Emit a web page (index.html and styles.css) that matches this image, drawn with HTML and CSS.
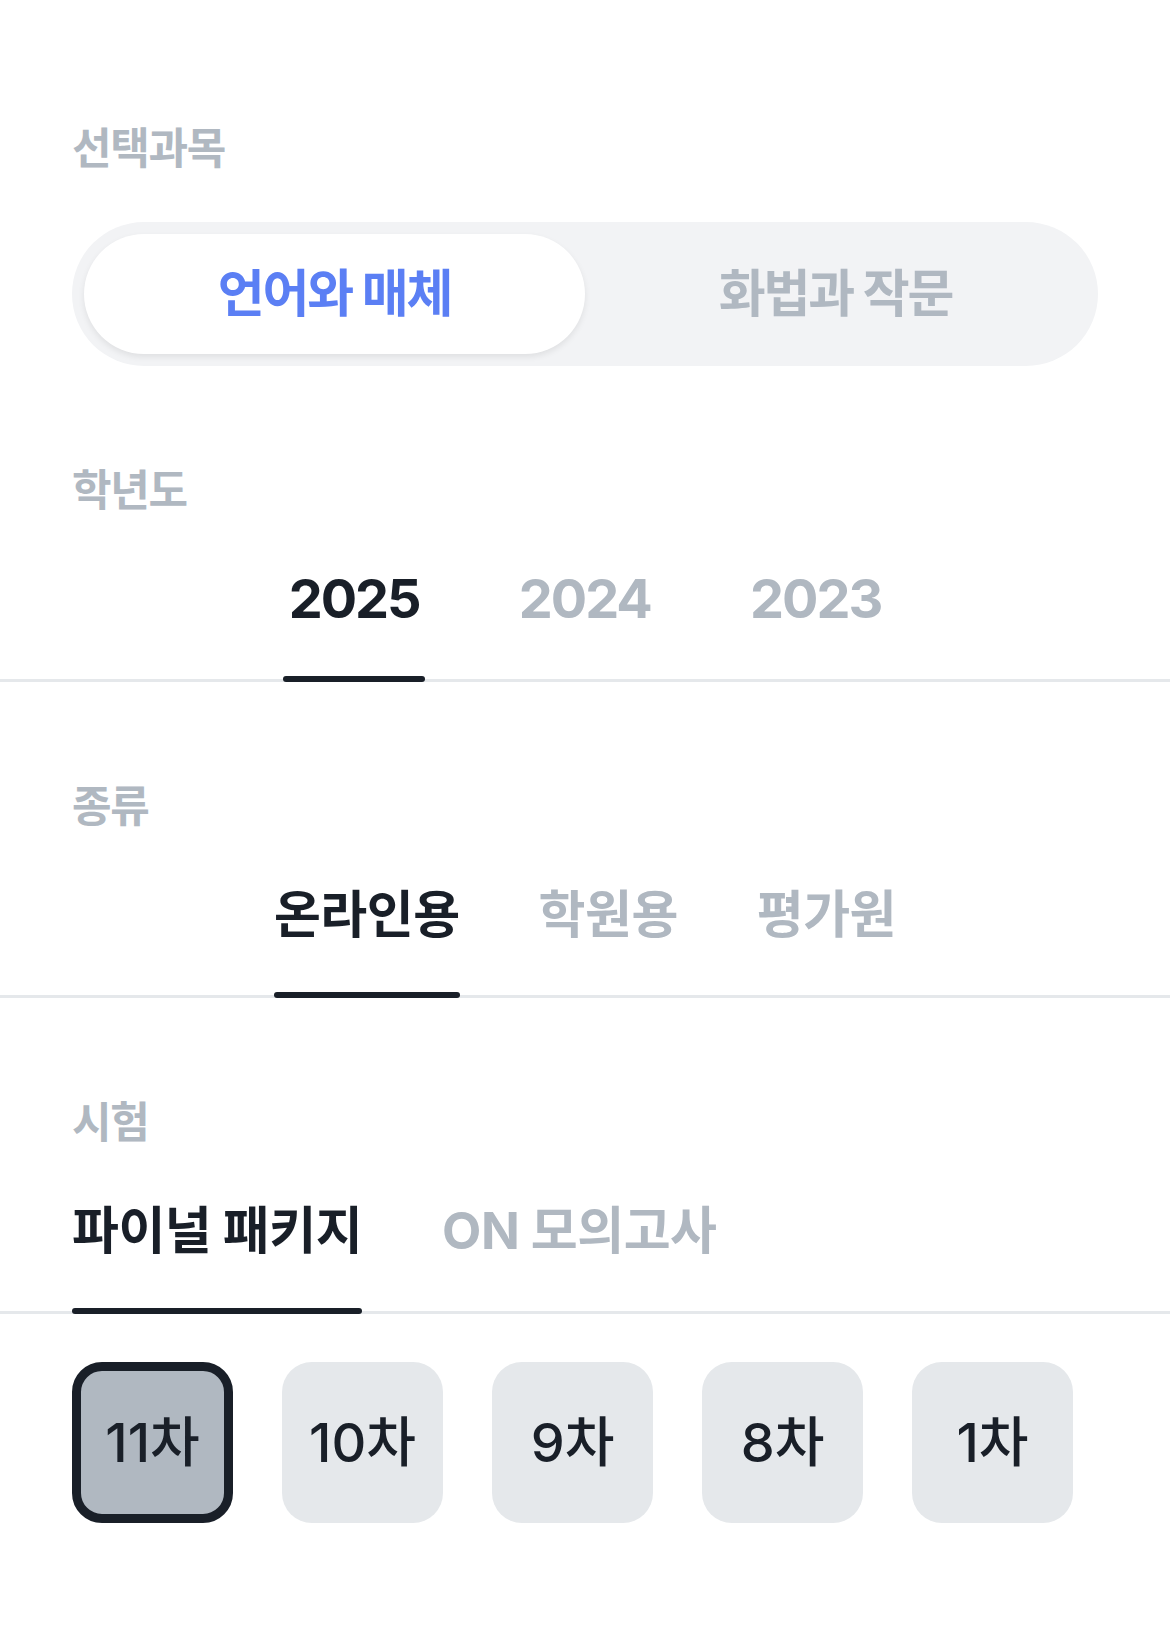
FILE: index.html
```html
<!DOCTYPE html>
<html lang="ko">
<head>
<meta charset="utf-8">
<title>선택과목</title>
<link rel="stylesheet" href="styles.css">
</head>
<body>
<main class="page">
  <section class="group">
    <h2 class="label">선택과목</h2>
    <div class="segment">
      <button class="segment-item is-active">언어와 매체</button>
      <button class="segment-item">화법과 작문</button>
    </div>
  </section>

  <section class="group">
    <h2 class="label">학년도</h2>
    <div class="tabs">
      <div class="tabs-inner tabs-center">
        <button class="tab tab-num is-active">2025</button>
        <button class="tab tab-num">2024</button>
        <button class="tab tab-num">2023</button>
      </div>
    </div>
  </section>

  <section class="group">
    <h2 class="label">종류</h2>
    <div class="tabs">
      <div class="tabs-inner tabs-center">
        <button class="tab is-active">온라인용</button>
        <button class="tab">학원용</button>
        <button class="tab">평가원</button>
      </div>
    </div>
  </section>

  <section class="group">
    <h2 class="label">시험</h2>
    <div class="tabs">
      <div class="tabs-inner tabs-left">
        <button class="tab is-active">파이널 패키지</button>
        <button class="tab">ON 모의고사</button>
      </div>
    </div>
    <div class="rounds">
      <button class="round is-active">11차</button>
      <button class="round">10차</button>
      <button class="round">9차</button>
      <button class="round">8차</button>
      <button class="round">1차</button>
    </div>
  </section>
</main>
</body>
</html>
```

FILE: styles.css
```css
* {
  box-sizing: border-box;
  margin: 0;
  padding: 0;
}

html,
body {
  background: #ffffff;
}

body {
  width: 1170px;
  min-height: 1644px;
  font-family: Inter, "Noto Sans CJK KR", sans-serif;
  color: #191f28;
}

button {
  font-family: Inter, "Noto Sans CJK KR", sans-serif;
  border: 0;
  background: none;
  cursor: pointer;
}

.page {
  padding-top: 123px;
}

.group + .group {
  margin-top: 99px;
}

.label {
  margin: 0 72px;
  font-size: 43px;
  line-height: 50px;
  font-weight: 600;
  letter-spacing: -1.3px;
  color: #b0b8c1;
}

/* segmented control */
.segment {
  display: flex;
  height: 144px;
  margin: 49px 72px 0;
  padding: 12px;
  border-radius: 72px;
  background: #f2f3f5;
}

.segment-item {
  flex: 1;
  height: 120px;
  border-radius: 60px;
  font-size: 51px;
  line-height: 120px;
  font-weight: 700;
  letter-spacing: -2.2px;
  color: #b0b8c1;
}

.segment-item.is-active {
  background: #ffffff;
  color: #5b7ff4;
  box-shadow: 0 3px 6px rgba(0, 0, 0, 0.08);
}

/* underline tabs */
.tabs {
  margin-top: 52px;
  border-bottom: 3px solid #e5e8eb;
}

.tabs-inner {
  display: flex;
}

.tabs-center {
  width: 780px;
  margin: 0 auto;
  justify-content: space-evenly;
}

.tabs-left {
  margin: 0 72px;
  gap: 80px;
}

.tab {
  position: relative;
  padding-bottom: 48px;
  font-size: 51px;
  line-height: 64px;
  font-weight: 700;
  letter-spacing: -0.5px;
  color: #b0b8c1;
  white-space: nowrap;
}

.tab-num {
  padding-left: 5.5px;
  padding-right: 5.5px;
  font-size: 54px;
  letter-spacing: -2px;
}

.tab.is-active {
  color: #191f28;
}

.tab.is-active::after {
  content: "";
  position: absolute;
  left: 0;
  right: 0;
  bottom: -3px;
  height: 6px;
  border-radius: 3px;
  background: #191f28;
}

/* round chips */
.rounds {
  display: flex;
  gap: 49px;
  margin: 48px 72px 0;
}

.round {
  width: 161px;
  height: 161px;
  border-radius: 30px;
  background: #e5e8eb;
  font-size: 54px;
  line-height: 1;
  font-weight: 500;
  letter-spacing: 0;
  color: #191f28;
}

.round.is-active {
  background: #b0b8c1;
  border: 9px solid #191f28;
}
```
